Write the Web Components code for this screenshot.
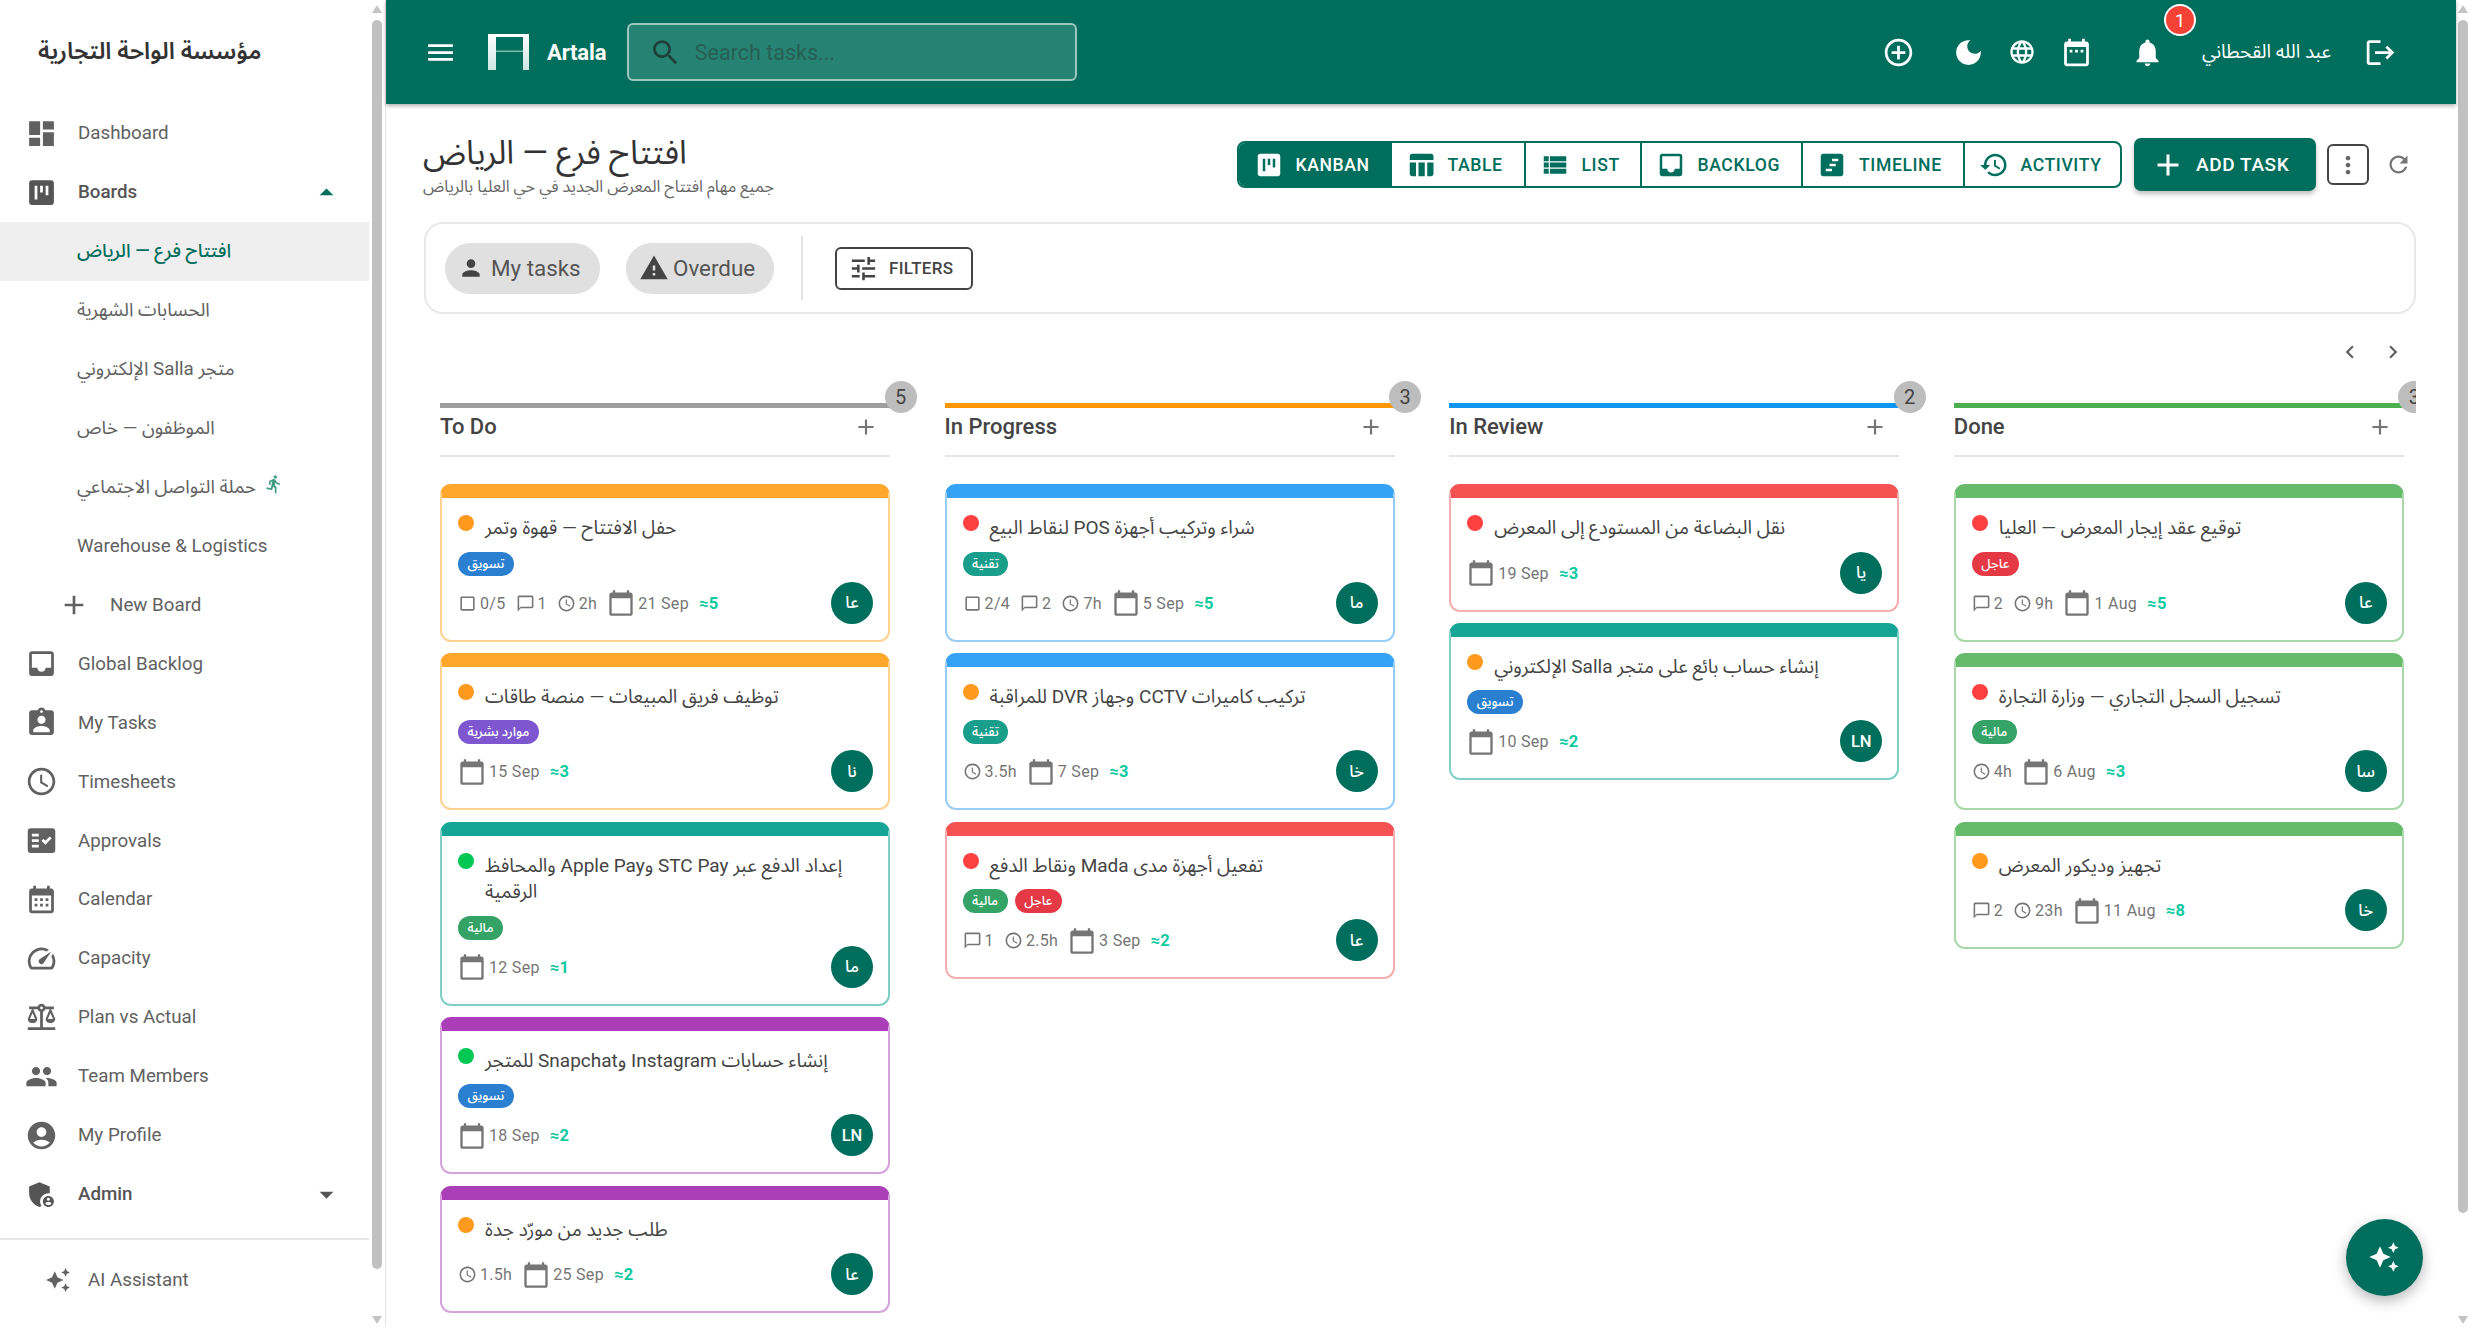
<!DOCTYPE html>
<html lang="en">
<head>
<meta charset="utf-8">
<title>Artala</title>
<style>
  html, body { margin: 0; height: 100%; overflow: hidden; background: #fff; }
  body { font-family: Roboto, "Noto Sans Arabic", "Noto Sans", "DejaVu Sans", sans-serif; color: #333; }
</style>
</head>
<body>
<app-shell>
  <side-nav slot="nav" heading="مؤسسة الواحة التجارية">
    <nav-item icon="dashboard">Dashboard</nav-item>
    <nav-item icon="kanban" bold arrow="up">Boards</nav-item>
    <nav-item sub active>افتتاح فرع — الرياض</nav-item>
    <nav-item sub>الحسابات الشهرية</nav-item>
    <nav-item sub>متجر Salla الإلكتروني</nav-item>
    <nav-item sub>الموظفون — خاص</nav-item>
    <nav-item sub runner>حملة التواصل الاجتماعي</nav-item>
    <nav-item sub>Warehouse &amp; Logistics</nav-item>
    <nav-item add>New Board</nav-item>
    <nav-item icon="inbox">Global Backlog</nav-item>
    <nav-item icon="assignmentInd">My Tasks</nav-item>
    <nav-item icon="clock">Timesheets</nav-item>
    <nav-item icon="factCheck">Approvals</nav-item>
    <nav-item icon="calendarMonth">Calendar</nav-item>
    <nav-item icon="speed">Capacity</nav-item>
    <nav-item icon="balance">Plan vs Actual</nav-item>
    <nav-item icon="people">Team Members</nav-item>
    <nav-item icon="account">My Profile</nav-item>
    <nav-item icon="admin" bold arrow="down">Admin</nav-item>
    <nav-item slot="foot" assistant>AI Assistant</nav-item>
  </side-nav>

  <top-bar slot="main" user="عبد الله القحطاني"></top-bar>

  <page-head slot="main" heading="افتتاح فرع — الرياض" sub="جميع مهام افتتاح المعرض الجديد في حي العليا بالرياض"></page-head>

  <filter-bar slot="main"></filter-bar>

  <board-pager slot="main"></board-pager>

  <kanban-board slot="main">
    <board-column name="To Do" count="5" color="#9e9e9e">
      <task-card strip="orange" dot="orange" tags="تسويق:blue" check="0/5" comments="1" time="2h" date="21 Sep" est="5" who="عا">حفل الافتتاح — قهوة وتمر</task-card>
      <task-card strip="orange" dot="orange" tags="موارد بشرية:purple" date="15 Sep" est="3" who="نا">توظيف فريق المبيعات — منصة طاقات</task-card>
      <task-card strip="teal" dot="green" tags="مالية:green" date="12 Sep" est="1" who="ما">إعداد الدفع عبر STC Pay وApple Pay والمحافظ الرقمية</task-card>
      <task-card strip="magenta" dot="green" tags="تسويق:blue" date="18 Sep" est="2" who="LN">إنشاء حسابات Instagram وSnapchat للمتجر</task-card>
      <task-card strip="magenta" dot="orange" time="1.5h" date="25 Sep" est="2" who="عا">طلب جديد من مورّد جدة</task-card>
    </board-column>
    <board-column name="In Progress" count="3" color="#ff9800">
      <task-card strip="blue" dot="red" tags="تقنية:teal" check="2/4" comments="2" time="7h" date="5 Sep" est="5" who="ما">شراء وتركيب أجهزة POS لنقاط البيع</task-card>
      <task-card strip="blue" dot="orange" tags="تقنية:teal" time="3.5h" date="7 Sep" est="3" who="خا">تركيب كاميرات CCTV وجهاز DVR للمراقبة</task-card>
      <task-card strip="red" dot="red" tags="مالية:green,عاجل:red" comments="1" time="2.5h" date="3 Sep" est="2" who="عا">تفعيل أجهزة مدى Mada ونقاط الدفع</task-card>
    </board-column>
    <board-column name="In Review" count="2" color="#0f96f0">
      <task-card strip="red" dot="red" date="19 Sep" est="3" who="يا">نقل البضاعة من المستودع إلى المعرض</task-card>
      <task-card strip="teal" dot="orange" tags="تسويق:blue" date="10 Sep" est="2" who="LN">إنشاء حساب بائع على متجر Salla الإلكتروني</task-card>
    </board-column>
    <board-column name="Done" count="3" color="#4caf50">
      <task-card strip="lime" dot="red" tags="عاجل:red" comments="2" time="9h" date="1 Aug" est="5" who="عا">توقيع عقد إيجار المعرض — العليا</task-card>
      <task-card strip="lime" dot="red" tags="مالية:green" time="4h" date="6 Aug" est="3" who="سا">تسجيل السجل التجاري — وزارة التجارة</task-card>
      <task-card strip="lime" dot="orange" comments="2" time="23h" date="11 Aug" est="8" who="خا">تجهيز وديكور المعرض</task-card>
    </board-column>
  </kanban-board>

  <assist-fab slot="main"></assist-fab>
</app-shell>

<script>
const ICONS = {
  dashboard: "M3 13h8V3H3v10zm0 8h8v-6H3v6zm10 0h8V11h-8v10zm0-18v6h8V3h-8z",
  kanban: "M19 3H5c-1.1 0-2 .9-2 2v14c0 1.1.9 2 2 2h14c1.1 0 2-.9 2-2V5c0-1.1-.9-2-2-2zM9 17H7V7h2v10zm4-5h-2V7h2v5zm4 2h-2V7h2v7z",
  table: "M10 10.02h5V21h-5zM17 21h3c1.1 0 2-.9 2-2v-9h-5v11zm3-18H5c-1.1 0-2 .9-2 2v3h19V5c0-1.1-.9-2-2-2zM3 19c0 1.1.9 2 2 2h3V10H3v9z",
  list: "M3 14h4v-4H3v4zm0 5h4v-4H3v4zM3 9h4V5H3v4zm5 5h13v-4H8v4zm0 5h13v-4H8v4zM8 5v4h13V5H8z",
  inbox: "M19 3H4.99c-1.11 0-1.98.89-1.98 2L3 19c0 1.1.88 2 1.99 2H19c1.1 0 2-.9 2-2V5c0-1.11-.9-2-2-2zm0 12h-4c0 1.66-1.35 3-3 3s-3-1.34-3-3H4.99V5H19v10z",
  timeline: "M19 3H5c-1.1 0-2 .9-2 2v14c0 1.1.9 2 2 2h14c1.1 0 2-.9 2-2V5c0-1.1-.9-2-2-2zm-7 14H7v-2h5v2zm3-4h-5v-2h5v2zm2-4h-5V7h5v2z",
  history: "M13 3c-4.97 0-9 4.03-9 9H1l3.89 3.89.07.14L9 12H6c0-3.87 3.13-7 7-7s7 3.13 7 7-3.13 7-7 7c-1.93 0-3.68-.79-4.94-2.06l-1.42 1.42C8.27 19.99 10.51 21 13 21c4.97 0 9-4.03 9-9s-4.03-9-9-9zm-1 5v5l4.28 2.54.72-1.21-3.5-2.08V8H12z",
  add: "M19 13h-6v6h-2v-6H5v-2h6V5h2v6h6v2z",
  more: "M12 8c1.1 0 2-.9 2-2s-.9-2-2-2-2 .9-2 2 .9 2 2 2zm0 2c-1.1 0-2 .9-2 2s.9 2 2 2 2-.9 2-2-.9-2-2-2zm0 6c-1.1 0-2 .9-2 2s.9 2 2 2 2-.9 2-2-.9-2-2-2z",
  refresh: "M17.65 6.35C16.2 4.9 14.21 4 12 4c-4.42 0-7.99 3.58-7.99 8s3.57 8 7.99 8c3.73 0 6.84-2.55 7.73-6h-2.08c-.82 2.33-3.04 4-5.65 4-3.31 0-6-2.69-6-6s2.69-6 6-6c1.66 0 3.14.69 4.22 1.78L13 11h7V4l-2.35 2.35z",
  menu: "M3 18h18v-2H3v2zm0-5h18v-2H3v2zm0-7v2h18V6H3z",
  search: "M15.5 14h-.79l-.28-.27C15.41 12.59 16 11.11 16 9.5 16 5.91 13.09 3 9.5 3S3 5.91 3 9.5 5.91 16 9.5 16c1.61 0 3.09-.59 4.23-1.57l.27.28v.79l5 4.99L20.49 19l-4.99-5zm-6 0C7.01 14 5 11.99 5 9.5S7.01 5 9.5 5 14 7.01 14 9.5 11.99 14 9.5 14z",
  addCircle: "M13 7h-2v4H7v2h4v4h2v-4h4v-2h-4V7zm-1-5C6.48 2 2 6.48 2 12s4.48 10 10 10 10-4.48 10-10S17.52 2 12 2zm0 18c-4.41 0-8-3.59-8-8s3.59-8 8-8 8 3.59 8 8-3.59 8-8 8z",
  moon: "M12 3c-4.97 0-9 4.03-9 9s4.03 9 9 9 9-4.03 9-9c0-.46-.04-.92-.1-1.36-.98 1.37-2.58 2.26-4.4 2.26-2.98 0-5.4-2.42-5.4-5.4 0-1.81.89-3.42 2.26-4.4-.44-.06-.9-.1-1.36-.1z",
  globe: "M11.99 2C6.47 2 2 6.48 2 12s4.47 10 9.99 10C17.52 22 22 17.52 22 12S17.52 2 11.99 2zm6.93 6h-2.95c-.32-1.25-.78-2.45-1.38-3.56 1.84.63 3.37 1.91 4.33 3.56zM12 4.04c.83 1.2 1.48 2.53 1.91 3.96h-3.82c.43-1.43 1.08-2.76 1.91-3.96zM4.26 14C4.1 13.36 4 12.69 4 12s.1-1.36.26-2h3.38c-.08.66-.14 1.32-.14 2 0 .68.06 1.34.14 2H4.26zm.82 2h2.95c.32 1.25.78 2.45 1.38 3.56-1.84-.63-3.37-1.9-4.33-3.56zm2.95-8H5.08c.96-1.66 2.49-2.93 4.33-3.56C8.81 5.55 8.35 6.75 8.03 8zM12 19.96c-.83-1.2-1.48-2.53-1.91-3.96h3.82c-.43 1.43-1.08 2.76-1.91 3.96zM14.34 14H9.66c-.09-.66-.16-1.32-.16-2 0-.68.07-1.35.16-2h4.68c.09.65.16 1.32.16 2 0 .68-.07 1.34-.16 2zm.25 5.56c.6-1.11 1.06-2.31 1.38-3.56h2.95c-.96 1.65-2.49 2.93-4.33 3.56zM16.36 14c.08-.66.14-1.32.14-2 0-.68-.06-1.34-.14-2h3.38c.16.64.26 1.31.26 2s-.1 1.36-.26 2h-3.38z",
  calendarDots: "M19 4h-1V2h-2v2H8V2H6v2H5c-1.11 0-1.99.9-1.99 2L3 20c0 1.1.89 2 2 2h14c1.1 0 2-.9 2-2V6c0-1.1-.9-2-2-2zm0 16H5V8h14v12zM9 12H7v-2h2v2zm4 0h-2v-2h2v2zm4 0h-2v-2h2v2z",
  calendarMonth: "M19 4h-1V2h-2v2H8V2H6v2H5c-1.11 0-1.99.9-1.99 2L3 20c0 1.1.89 2 2 2h14c1.1 0 2-.9 2-2V6c0-1.1-.9-2-2-2zm0 16H5V9h14v11zM9 13H7v-2h2v2zm4 0h-2v-2h2v2zm4 0h-2v-2h2v2zm-8 4H7v-2h2v2zm4 0h-2v-2h2v2zm4 0h-2v-2h2v2z",
  calendar: "M20 3h-1V1h-2v2H7V1H5v2H4c-1.1 0-2 .9-2 2v16c0 1.1.9 2 2 2h16c1.1 0 2-.9 2-2V5c0-1.1-.9-2-2-2zm0 18H4V8h16v13z",
  bell: "M12 22c1.1 0 2-.9 2-2h-4c0 1.1.89 2 2 2zm6-6v-5c0-3.07-1.64-5.64-4.5-6.32V4c0-.83-.67-1.5-1.5-1.5s-1.5.67-1.5 1.5v.68C7.63 5.36 6 7.92 6 11v5l-2 2v1h16v-1l-2-2z",
  logout: "M17 7l-1.41 1.41L18.17 11H8v2h10.17l-2.58 2.58L17 17l5-5zM4 5h8V3H4c-1.1 0-2 .9-2 2v14c0 1.1.9 2 2 2h8v-2H4V5z",
  person: "M12 12c2.21 0 4-1.79 4-4s-1.79-4-4-4-4 1.79-4 4 1.79 4 4 4zm0 2c-2.67 0-8 1.34-8 4v2h16v-2c0-2.66-5.33-4-8-4z",
  warning: "M1 21h22L12 2 1 21zm12-3h-2v-2h2v2zm0-4h-2v-4h2v4z",
  tune: "M3 17v2h6v-2H3zM3 5v2h10V5H3zm10 16v-2h8v-2h-8v-2h-2v6h2zM7 9v2H3v2h4v2h2V9H7zm14 4v-2H11v2h10zm-6-4h2V7h4V5h-4V3h-2v6z",
  left: "M15.41 7.41 14 6l-6 6 6 6 1.41-1.41L10.83 12z",
  right: "M10 6 8.59 7.41 13.17 12l-4.58 4.59L10 18l6-6z",
  up: "M7 14l5-5 5 5z",
  down: "M7 10l5 5 5-5z",
  assignmentInd: "M19 3h-4.18C14.4 1.84 13.3 1 12 1c-1.3 0-2.4.84-2.82 2H5c-1.1 0-2 .9-2 2v14c0 1.1.9 2 2 2h14c1.1 0 2-.9 2-2V5c0-1.1-.9-2-2-2zm-7 0c.55 0 1 .45 1 1s-.45 1-1 1-1-.45-1-1 .45-1 1-1zm0 4c1.66 0 3 1.34 3 3s-1.34 3-3 3-3-1.34-3-3 1.34-3 3-3zm6 12H6v-1.4c0-2 4-3.1 6-3.1s6 1.1 6 3.1V19z",
  clock: "M11.99 2C6.47 2 2 6.48 2 12s4.47 10 9.99 10C17.52 22 22 17.52 22 12S17.52 2 11.99 2zM12 20c-4.42 0-8-3.58-8-8s3.58-8 8-8 8 3.58 8 8-3.58 8-8 8zm.5-13H11v6l5.25 3.15.75-1.23-4.5-2.67z",
  factCheck: "M20 3H4c-1.1 0-2 .9-2 2v14c0 1.1.9 2 2 2h16c1.1 0 2-.9 2-2V5c0-1.1-.9-2-2-2zM10 17H5v-2h5v2zm0-4H5v-2h5v2zm0-4H5V7h5v2zm4.82 6L12 12.16l1.41-1.41 1.41 1.42L17.99 9l1.42 1.42L14.82 15z",
  speed: "M20.38 8.57l-1.23 1.85a8 8 0 0 1-.22 7.58H5.07A8 8 0 0 1 15.58 6.85l1.85-1.23A10 10 0 0 0 3.35 19a2 2 0 0 0 1.72 1h13.85a2 2 0 0 0 1.74-1 10 10 0 0 0-.27-10.44zm-9.79 6.84a2 2 0 0 0 2.83 0l5.66-8.49-8.49 5.66a2 2 0 0 0 0 2.83z",
  balance: "M13 7.83c.85-.3 1.53-.98 1.83-1.83H18l-3 7c0 1.66 1.57 3 3.5 3s3.5-1.34 3.5-3l-3-7h2V4h-6.17c-.41-1.17-1.52-2-2.83-2s-2.42.83-2.83 2H3v2h2l-3 7c0 1.66 1.57 3 3.5 3S9 14.66 9 13L6 6h3.17c.3.85.98 1.53 1.83 1.83V19H2v2h20v-2h-9V7.83zM20.37 13h-3.74l1.87-4.36L20.37 13zm-13 0H3.63L5.5 8.64 7.37 13zM12 6c-.55 0-1-.45-1-1s.45-1 1-1 1 .45 1 1-.45 1-1 1z",
  people: "M16 11c1.66 0 2.99-1.34 2.99-3S17.66 5 16 5c-1.66 0-3 1.34-3 3s1.34 3 3 3zm-8 0c1.66 0 2.99-1.34 2.99-3S9.66 5 8 5C6.34 5 5 6.34 5 8s1.34 3 3 3zm0 2c-2.33 0-7 1.17-7 3.5V19h14v-2.5c0-2.33-4.67-3.5-7-3.5zm8 0c-.29 0-.62.02-.97.05 1.16.84 1.97 1.97 1.97 3.45V19h6v-2.5c0-2.33-4.67-3.5-7-3.5z",
  account: "M12 2C6.48 2 2 6.48 2 12s4.48 10 10 10 10-4.48 10-10S17.52 2 12 2zm0 4c1.93 0 3.5 1.57 3.5 3.5S13.93 13 12 13s-3.5-1.57-3.5-3.5S10.07 6 12 6zm0 14c-2.03 0-4.43-.82-6.14-2.88C7.55 15.8 9.68 15 12 15s4.45.8 6.14 2.12C16.43 19.18 14.03 20 12 20z",
  admin: "M17 11c.34 0 .67.04 1 .09V6.27L10.5 3 3 6.27v4.91c0 4.54 3.2 8.79 7.5 9.82.55-.13 1.08-.32 1.6-.55-.69-.98-1.1-2.17-1.1-3.45 0-3.31 2.69-6 6-6zm0 2c-2.21 0-4 1.79-4 4s1.79 4 4 4 4-1.79 4-4-1.79-4-4-4zm0 1.38c.62 0 1.12.51 1.12 1.12s-.51 1.12-1.12 1.12-1.12-.51-1.12-1.12.5-1.12 1.12-1.12zm0 5.37c-.93 0-1.74-.46-2.24-1.17.05-.72 1.51-1.08 2.24-1.08s2.19.36 2.24 1.08c-.5.71-1.31 1.17-2.24 1.17z",
  sparkle: "M19 9l1.25-2.75L23 5l-2.75-1.25L19 1l-1.25 2.75L15 5l2.75 1.25L19 9zm-7.5.5L9 4 6.5 9.5 1 12l5.5 2.5L9 20l2.5-5.5L17 12l-5.5-2.5zM19 15l-1.25 2.75L15 19l2.75 1.25L19 23l1.25-2.75L23 19l-2.75-1.25L19 15z",
  run: "M13.49 5.48c1.1 0 2-.9 2-2s-.9-2-2-2-2 .9-2 2 .9 2 2 2zm-3.6 13.9l1-4.4 2.1 2v6h2v-7.5l-2.1-2 .6-3c1.3 1.5 3.3 2.5 5.5 2.5v-2c-1.9 0-3.5-1-4.3-2.4l-1-1.6c-.4-.6-1-1-1.7-1-.3 0-.5.1-.8.1l-5.2 2.2v4.7h2v-3.4l1.8-.7-1.6 8.1-4.9-1-.4 2 7 1.4z",
  checkbox: "M19 5v14H5V5h14m0-2H5c-1.1 0-2 .9-2 2v14c0 1.1.9 2 2 2h14c1.1 0 2-.9 2-2V5c0-1.1-.9-2-2-2z",
  comment: "M20 2H4c-1.1 0-2 .9-2 2v18l4-4h14c1.1 0 2-.9 2-2V4c0-1.1-.9-2-2-2zm0 14H6l-2 2V4h16v12z"
};

function svg(name, size) {
  return `<svg width="${size}" height="${size}" viewBox="0 0 24 24" fill="currentColor" style="display:block;flex:none"><path d="${ICONS[name]}"/></svg>`;
}

class AppShell extends HTMLElement {
  constructor() {
    super();
    this.attachShadow({ mode: "open" }).innerHTML = `
    <style>
      :host { display: flex; height: 100vh; overflow: hidden; position: relative; }
      .main { flex: 1; min-width: 0; display: flex; flex-direction: column; }
      .rail { flex: none; width: 14px; }
    </style>
    <slot name="nav"></slot>
    <div class="main"><slot name="main"></slot></div>
    <scroll-rail class="rail" end="1213" style="padding:0 2px 0 3px"></scroll-rail>
    `;
  }
}

class ScrollRail extends HTMLElement {
  constructor() {
    super();
    this.attachShadow({ mode: "open" });
  }
  connectedCallback() {
    const end = this.getAttribute("end");
    this.shadowRoot.innerHTML = `
    <style>
      :host { display: block; box-sizing: border-box; position: relative; height: 100vh; }
      .up, .down { position: absolute; left: 50%; margin-left: -5px; width: 0; height: 0; border: 5px solid transparent; }
      .up { top: 0; border-bottom: 8px solid #c4c4c4; border-top-width: 0; top: 5px; }
      .down { bottom: 3px; border-top: 8px solid #c4c4c4; border-bottom-width: 0; }
      .thumb { position: absolute; top: 20px; height: ${end - 20}px; width: 9.5px; left: 50%; margin-left: -4.75px; background: #c1c1c1; border-radius: 5px; }
    </style>
    <div class="up"></div><div class="thumb"></div><div class="down"></div>
    `;
  }
}

class SideNav extends HTMLElement {
  constructor() {
    super();
    this.attachShadow({ mode: "open" });
  }
  connectedCallback() {
    this.shadowRoot.innerHTML = `
    <style>
      :host { display: flex; flex: none; width: 385px; height: 100vh; border-right: 1px solid #e6e6e6; box-sizing: content-box; }
      .col { width: 369px; flex: none; display: flex; flex-direction: column; }
      .brand { height: 103.8px; flex: none; display: flex; align-items: center; padding-left: 38px; font-size: 23.5px; font-weight: 600; color: #333; }
      .brand span { unicode-bidi: plaintext; }
      .list { flex: none; }
      .foot { border-top: 2px solid #e6e6e6; margin-top: 14.2px; padding-top: 11px; }
      scroll-rail { width: 16px; }
    </style>
    <div class="col">
      <div class="brand"><span>${this.getAttribute("heading")}</span></div>
      <div class="list"><slot></slot></div>
      <div class="foot"><slot name="foot"></slot></div>
    </div>
    <scroll-rail end="1269"></scroll-rail>
    `;
  }
}

class NavItem extends HTMLElement {
  constructor() {
    super();
    this.attachShadow({ mode: "open" });
  }
  connectedCallback() {
    const icon = this.getAttribute("icon");
    const arrow = this.getAttribute("arrow");
    const lead = icon ? `<span class="ic">${svg(icon, 33)}</span>`
      : this.hasAttribute("add") ? `<span class="ic">${svg("add", 32)}</span>`
      : this.hasAttribute("assistant") ? `<span class="ic">${svg("sparkle", 26)}</span>` : "";
    this.shadowRoot.innerHTML = `
    <style>
      :host { display: flex; align-items: center; height: 58.94px; padding: 0 25px; box-sizing: border-box; color: #616161; font-size: 18.75px; }
      :host([bold]) { font-weight: 500; color: #555; }
      :host([sub]) { padding-left: 77px; }
      :host([active]) { background: #efefef; color: #006e5c; font-weight: 500; }
      :host([add]) { padding-left: 58px; }
      :host([add]) .ic { width: 52px; }
      :host([assistant]) { padding-left: 45px; }
      :host([assistant]) .ic { width: 43px; }
      .ic { width: 53px; flex: none; display: block; }
      .label { flex: 1; text-align: left; white-space: nowrap; display: flex; align-items: center; }
      .text { unicode-bidi: plaintext; }
      .arrow { flex: none; margin-right: 1px; }
      .arrow.up { color: #006e5c; }
      .run { color: #3f9d85; margin-left: 8px; margin-top: -6px; }
    </style>
    ${lead}
    <span class="label"><span class="text"><slot></slot></span>${this.hasAttribute("runner") ? `<span class="run">${svg("run", 20)}</span>` : ""}</span>
    ${arrow ? `<span class="arrow ${arrow}">${svg(arrow, 33)}</span>` : ""}
    `;
  }
}

class TopBar extends HTMLElement {
  constructor() {
    super();
    this.attachShadow({ mode: "open" });
  }
  connectedCallback() {
    this.shadowRoot.innerHTML = `
    <style>
      :host { display: flex; align-items: center; flex: none; height: 104px; padding: 0 59px 0 38px; background: #006e5c; color: #fff; box-shadow: 0 2px 4px rgba(0,0,0,.3); position: relative; z-index: 2; box-sizing: border-box; }
      .logo { margin-left: 31px; flex: none; display: block; }
      .name { margin-left: 18px; font-size: 22px; font-weight: 700; letter-spacing: -.15px; }
      .search { margin-left: 21px; width: 450px; height: 58px; box-sizing: border-box; background: #268273; border: 2px solid #a0c5be; border-radius: 6px; display: flex; align-items: center; padding-left: 20px; gap: 12.5px; color: #1f3f3a; font-size: 21.5px; }
      .search span { color: #265f54; }
      .tools { margin-left: auto; display: flex; align-items: center; }
      .t { flex: none; display: block; position: relative; }
      .user { margin-left: 38px; width: 130px; font-size: 19px; white-space: nowrap; }
      .user span { unicode-bidi: plaintext; }
      .badge { position: absolute; left: 33px; top: -31.5px; box-sizing: border-box; width: 32px; height: 32px; border-radius: 50%; background: #f44336; border: 2px solid #fff; font-size: 18px; display: flex; align-items: center; justify-content: center; }
    </style>
    ${svg("menu", 33)}
    <svg class="logo" width="41" height="36" viewBox="0 0 41 36">
      <defs><linearGradient id="lg" x1="0" x2="0" y1="0" y2="1"><stop offset="0" stop-color="#fff"/><stop offset="1" stop-color="#cfe6e1"/></linearGradient></defs>
      <path d="M0 0h41v36h-6V3H8v33H0z" fill="url(#lg)"/>
      <rect x="8" y="16.5" width="27" height="1.5" fill="#7fb8ad"/>
    </svg>
    <span class="name">Artala</span>
    <div class="search">${svg("search", 33)}<span>Search tasks...</span></div>
    <div class="tools">
      <span class="t">${svg("addCircle", 33)}</span>
      <span class="t" style="margin-left:37.5px">${svg("moon", 33)}</span>
      <span class="t" style="margin-left:23px">${svg("globe", 28)}</span>
      <span class="t" style="margin-left:24px">${svg("calendarDots", 33)}</span>
      <span class="t" style="margin-left:38px">${svg("bell", 33)}<span class="badge">1</span></span>
      <span class="user"><span>${this.getAttribute("user")}</span></span>
      <span class="t" style="margin-left:32px">${svg("logout", 33)}</span>
    </div>
    `;
  }
}

class PageHead extends HTMLElement {
  constructor() {
    super();
    this.attachShadow({ mode: "open" });
  }
  connectedCallback() {
    const tabs = [["kanban", "Kanban", 151], ["table", "Table", 134], ["list", "List", 116], ["inbox", "Backlog", 161.5], ["timeline", "Timeline", 161.5], ["history", "Activity", 157.5]];
    const tabHtml = tabs.map(([ic, label, w], i) =>
      `<span class="tab ${i === 0 ? "on" : ""}" style="width:${w}px">${svg(ic, 30)}<span>${label}</span></span>`).join("");
    this.shadowRoot.innerHTML = `
    <style>
      :host { display: flex; flex: none; align-items: center; height: 75px; margin: 23px 40px 20px 37px; }
      .titles { flex: 1; align-self: flex-start; padding-top: 2px; min-width: 0; }
      h1 { margin: 0; font-size: 33px; font-weight: 400; line-height: 47px; color: #333; text-align: left; unicode-bidi: plaintext; }
      p { margin: 0; font-size: 16.3px; line-height: 22px; color: #666; text-align: left; unicode-bidi: plaintext; }
      .tabs { display: flex; height: 47px; box-sizing: border-box; border: 2px solid #006e5c; border-radius: 8px; overflow: hidden; flex: none; color: #006e5c; }
      .tab { box-sizing: border-box; display: flex; align-items: center; gap: 12px; padding-left: 14px; font-size: 17.6px; font-weight: 500; letter-spacing: .6px; text-transform: uppercase; border-left: 2px solid #006e5c; white-space: nowrap; }
      .tab:first-child { border-left: 0; padding-left: 15px; }
      .tab.on { background: #006e5c; color: #fff; }
      .add { flex: none; margin-left: 12px; width: 182px; height: 53px; box-sizing: border-box; padding-left: 16px; background: #006e5c; color: #fff; border-radius: 7px; display: flex; align-items: center; gap: 10px; font-size: 19px; font-weight: 500; letter-spacing: .6px; box-shadow: 0 3px 5px rgba(0,0,0,.25); }
      .more { flex: none; margin-left: 11px; width: 42px; height: 41px; box-sizing: border-box; border: 2px solid #444; border-radius: 6px; color: #666; display: flex; align-items: center; justify-content: center; }
      .refresh { flex: none; margin-left: 11px; width: 36px; display: flex; justify-content: center; color: #757575; }
    </style>
    <div class="titles">
      <h1>${this.getAttribute("heading")}</h1>
      <p>${this.getAttribute("sub")}</p>
    </div>
    <div class="tabs">${tabHtml}</div>
    <span class="add">${svg("add", 36)}<span>ADD TASK</span></span>
    <span class="more">${svg("more", 28)}</span>
    <span class="refresh">${svg("refresh", 27)}</span>
    `;
  }
}

class FilterBar extends HTMLElement {
  constructor() {
    super();
    this.attachShadow({ mode: "open" });
  }
  connectedCallback() {
    this.shadowRoot.innerHTML = `
    <style>
      :host { display: flex; flex: none; align-items: center; height: 92px; box-sizing: border-box; margin: 0 40px 0 38px; padding-left: 19px; border: 2px solid #e8e8e8; border-radius: 19px; }
      .chip { display: flex; align-items: center; height: 51px; border-radius: 26px; background: #e0e0e0; color: #555; font-size: 22.4px; box-sizing: border-box; }
      .chip svg { color: #444; }
      .div { width: 2px; height: 64px; background: #e4e4e4; margin: 0 32px 0 27px; }
      .btn { display: flex; align-items: center; height: 43px; width: 138px; box-sizing: border-box; padding-left: 11px; gap: 10px; border: 2px solid #444; border-radius: 6px; color: #444; font-size: 17px; font-weight: 500; letter-spacing: .3px; }
    </style>
    <span class="chip" style="width:155px;padding-left:13px;gap:7px">${svg("person", 26)}My tasks</span>
    <span class="chip" style="width:148px;padding-left:13px;gap:4px;margin-left:26px">${svg("warning", 30)}Overdue</span>
    <span class="div"></span>
    <span class="btn">${svg("tune", 31)}FILTERS</span>
    `;
  }
}

class BoardPager extends HTMLElement {
  constructor() {
    super();
    this.attachShadow({ mode: "open" });
  }
  connectedCallback() {
    this.shadowRoot.innerHTML = `
    <style>
      :host { display: flex; flex: none; justify-content: flex-end; align-items: center; gap: 17px; height: 44px; margin: 16px 50px 0 0; color: #616161; }
    </style>
    ${svg("left", 26)}${svg("right", 26)}
    `;
  }
}

class KanbanBoard extends HTMLElement {
  constructor() {
    super();
    this.attachShadow({ mode: "open" }).innerHTML = `
    <style>
      :host { display: flex; flex: 1; min-height: 0; gap: 54.6px; margin: 0 40px 0 38px; padding: 29px 0 0 16px; overflow: hidden; }
    </style>
    <slot></slot>
    `;
  }
}

class BoardColumn extends HTMLElement {
  constructor() {
    super();
    this.attachShadow({ mode: "open" });
  }
  connectedCallback() {
    this.shadowRoot.innerHTML = `
    <style>
      :host { display: block; flex: none; width: 450px; position: relative; }
      .bar { height: 5px; background: ${this.getAttribute("color")}; }
      .badge { position: absolute; right: -26.5px; top: -22px; width: 32px; height: 32px; border-radius: 50%; background: #bdbdbd; color: #444; font-size: 20px; display: flex; align-items: center; justify-content: center; }
      .head { display: flex; align-items: center; justify-content: space-between; height: 49px; box-sizing: border-box; border-bottom: 2px solid #e5e5e5; padding: 0 11px 10px 0; margin-bottom: 27px; font-size: 22px; font-weight: 500; color: #444; }
      .head svg { color: #757575; }
      .cards { display: flex; flex-direction: column; gap: 11.2px; }
    </style>
    <div class="bar"></div>
    <span class="badge">${this.getAttribute("count")}</span>
    <div class="head"><span>${this.getAttribute("name")}</span>${svg("add", 26)}</div>
    <div class="cards"><slot></slot></div>
    `;
  }
}

const STRIP = {
  orange: ["#ffa72c", "#ffd28f"],
  teal: ["#14a596", "#80cfc7"],
  magenta: ["#ab3fb8", "#d5a2dc"],
  blue: ["#36a2f5", "#98cdf8"],
  red: ["#f55353", "#f6aeae"],
  lime: ["#66bb6a", "#a8d8aa"]
};
const DOTS = { orange: "#ff9a1f", green: "#00c853", red: "#ff4040" };
const TAGS = { blue: "#2a7fd0", purple: "#7e57d0", green: "#34a365", teal: "#1a9e8c", red: "#e53945" };

class TaskCard extends HTMLElement {
  constructor() {
    super();
    this.attachShadow({ mode: "open" });
  }
  connectedCallback() {
    const a = (n) => this.getAttribute(n);
    const [strip, edge] = STRIP[a("strip")];
    const tags = a("tags") ? a("tags").split(",").map((t) => {
      const [label, c] = t.split(":");
      return `<span class="tag" style="background:${TAGS[c]}">${label}</span>`;
    }).join("") : "";
    let meta = "";
    if (a("check")) meta += `<span class="m">${svg("checkbox", 19)}${a("check")}</span>`;
    if (a("comments")) meta += `<span class="m">${svg("comment", 19)}${a("comments")}</span>`;
    if (a("time")) meta += `<span class="m">${svg("clock", 19)}${a("time")}</span>`;
    this.shadowRoot.innerHTML = `
    <style>
      :host { display: block; box-sizing: border-box; border: 2px solid ${edge}; border-top: 14px solid ${strip}; border-radius: 11px; padding: 19px 15px 16.1px 16px; background: #fff; }
      .title { display: flex; gap: 11px; margin-bottom: 8px; line-height: 26.5px; }
      .dot { flex: none; width: 16px; height: 16px; border-radius: 50%; margin-top: -2px; background: ${DOTS[a("dot")]}; }
      .text { font-size: 19px; line-height: 26.5px; margin: -2px 0 2px; color: #444; text-align: left; unicode-bidi: plaintext; padding-right: 20px; }
      .tags { display: flex; gap: 7px; margin-bottom: 6px; }
      .tag { height: 24px; padding: 0 9.5px; border-radius: 12px; color: #fff; font-size: 13px; font-weight: 500; display: flex; align-items: center; line-height: 24px; }
      .row { display: flex; align-items: center; height: 42px; padding-right: 0; }
      .meta { flex: 1; display: flex; align-items: center; gap: 10px; color: #757575; font-size: 16px; letter-spacing: .3px; margin-top: 1px; }
      .m { display: flex; align-items: center; gap: 3px; }
      .d { display: flex; align-items: center; gap: 3px; }
      .est { color: #0cc9a0; font-weight: 700; font-size: 16.5px; }
      .who { flex: none; width: 42px; height: 42px; border-radius: 50%; background: #006e5c; color: #fff; display: flex; align-items: center; justify-content: center; font-size: 16.5px; font-weight: 500; }
    </style>
    <div class="title"><span class="dot"></span><span class="text"><slot></slot></span></div>
    ${tags ? `<div class="tags">${tags}</div>` : ""}
    <div class="row">
      <div class="meta">${meta}<span class="d">${svg("calendar", 28)}${a("date")}</span><span class="est">≈${a("est")}</span></div>
      <span class="who">${a("who")}</span>
    </div>
    `;
  }
}

class AssistFab extends HTMLElement {
  constructor() {
    super();
    this.attachShadow({ mode: "open" }).innerHTML = `
    <style>
      :host { position: absolute; left: 2345.5px; top: 1218.5px; width: 77px; height: 77px; border-radius: 50%; background: #006e5c; color: #fff; display: flex; align-items: center; justify-content: center; box-shadow: 0 5px 14px rgba(0,0,0,.28); z-index: 5; }
    </style>
    ${svg("sparkle", 32)}
    `;
  }
}

customElements.define("app-shell", AppShell);
customElements.define("scroll-rail", ScrollRail);
customElements.define("side-nav", SideNav);
customElements.define("nav-item", NavItem);
customElements.define("top-bar", TopBar);
customElements.define("page-head", PageHead);
customElements.define("filter-bar", FilterBar);
customElements.define("board-pager", BoardPager);
customElements.define("kanban-board", KanbanBoard);
customElements.define("board-column", BoardColumn);
customElements.define("task-card", TaskCard);
customElements.define("assist-fab", AssistFab);
</script>
</body>
</html>
